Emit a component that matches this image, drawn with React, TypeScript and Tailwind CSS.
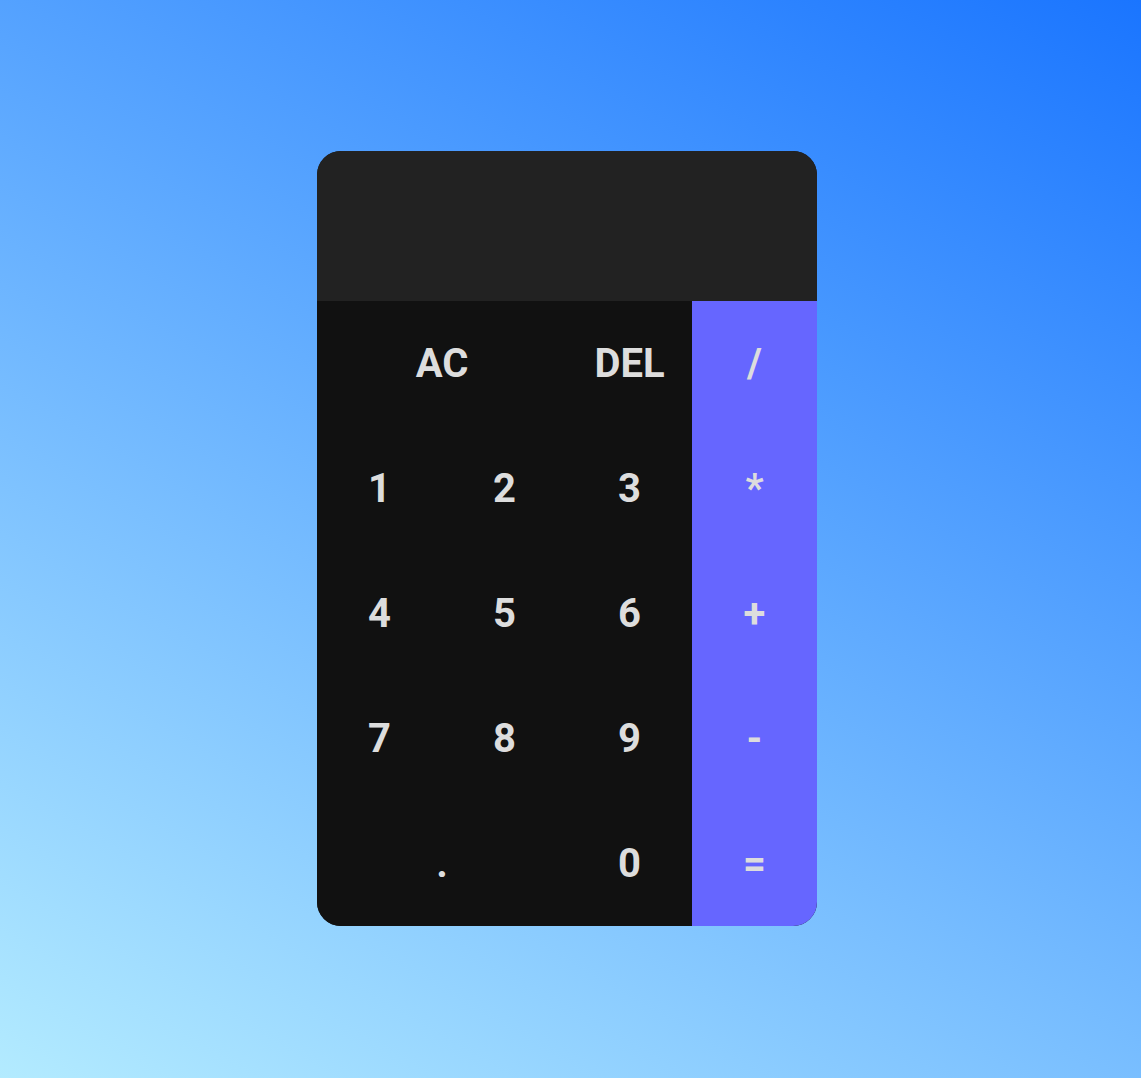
import React from "react";

const keys: { label: string; span?: boolean; op?: boolean }[] = [
    { label: "AC", span: true },
    { label: "DEL" },
    { label: "/", op: true },
    { label: "1" },
    { label: "2" },
    { label: "3" },
    { label: "*", op: true },
    { label: "4" },
    { label: "5" },
    { label: "6" },
    { label: "+", op: true },
    { label: "7" },
    { label: "8" },
    { label: "9" },
    { label: "-", op: true },
    { label: ".", span: true },
    { label: "0" },
    { label: "=", op: true },
];

const App: React.FC = () => {
    return (
        <div
            className="min-h-[1078px] w-full flex items-start justify-center pt-[151px] pr-[7px] bg-[linear-gradient(30deg,#b3ebff,#1a75ff)]"
            style={{ fontFamily: "Roboto, sans-serif" }}
        >
            <div className="w-[500px] rounded-[24px] overflow-hidden bg-[#111111]">
                <div className="h-[150px] bg-[#222222]"></div>
                <div className="grid grid-cols-[repeat(4,125px)] auto-rows-[125px]">
                    {keys.map((k) => (
                        <button
                            key={k.label}
                            className={
                                (k.span ? "col-span-2 " : "") +
                                (k.op ? "bg-[#6666ff] " : "bg-[#111111] ") +
                                "flex items-center justify-center text-[40px] font-bold text-[#dddddd] leading-none"
                            }
                        >
                            {k.label}
                        </button>
                    ))}
                </div>
            </div>
        </div>
    );
};

export default App;
